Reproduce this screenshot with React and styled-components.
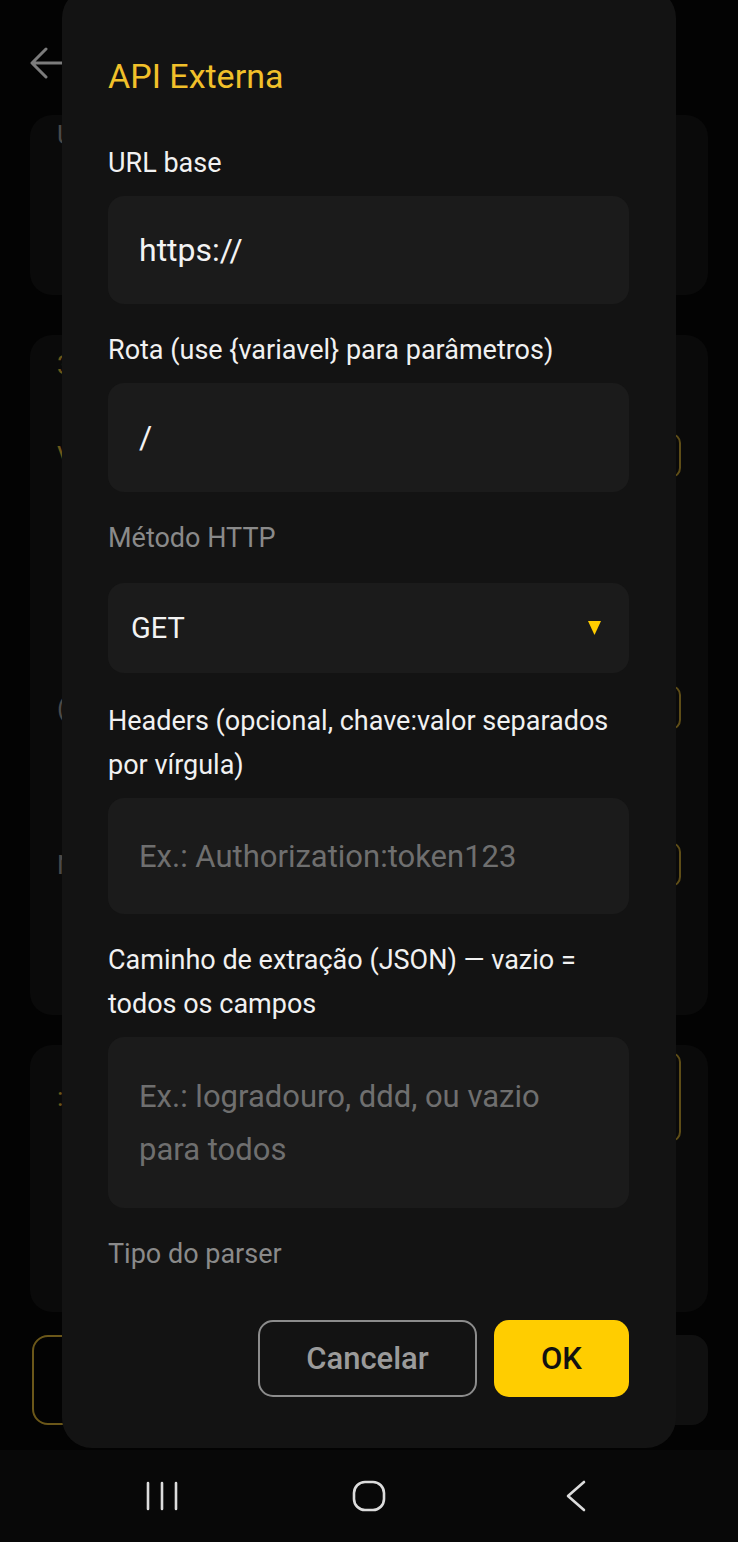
import React from "react";
import styled, { createGlobalStyle } from "styled-components";

const GlobalStyle = createGlobalStyle`
  html, body {
    margin: 0;
    padding: 0;
    background: #030303;
  }
  body {
    font-family: Roboto, "Noto Sans", "Liberation Sans", sans-serif;
  }
`;

const Phone = styled.div`
  position: relative;
  width: 738px;
  height: 1542px;
  overflow: hidden;
  display: flex;
  flex-direction: column;
  background: #030303;
`;

/* the page that sits dimmed behind the dialog */
const Screen = styled.div`
  flex: 1;
  display: flex;
  flex-direction: column;
  padding: 0 30px;
`;

const Header = styled.div`
  height: 115px;
  display: flex;
  align-items: flex-start;
  padding-top: 47px;
  box-sizing: border-box;
`;

const Card = styled.div`
  height: ${(p) => p.$h}px;
  margin-top: ${(p) => p.$gap}px;
  background: #0a0a0a;
  border-radius: 22px;
  padding: ${(p) => p.$pad || "0 27px"};
  box-sizing: border-box;
  display: flex;
  flex-direction: column;
`;

/* only a sliver of these glyphs peeks out from behind the dialog */
const DimText = styled.div`
  font-size: 26px;
  line-height: 40px;
  color: ${(p) => (p.$gold ? "#6b5719" : "#4a4a4a")};
  margin-top: ${(p) => p.$mt || 0}px;
`;

const DimRow = styled.div`
  display: flex;
  align-items: center;
  justify-content: space-between;
  margin-top: ${(p) => p.$mt || 0}px;
`;

const OutlineBox = styled.div`
  width: 220px;
  height: ${(p) => p.$h || 45}px;
  border: 2px solid #5e4d17;
  border-radius: 10px;
  box-sizing: border-box;
`;

const BottomButtons = styled.div`
  display: flex;
  gap: 20px;
  margin-top: 23px;
  margin-left: 2px;
`;

const GhostButton = styled.div`
  flex: 1;
  height: 90px;
  border-radius: 16px;
  box-sizing: border-box;
  border: ${(p) => (p.$outline ? "2px solid #6b5719" : "none")};
  background: ${(p) => (p.$outline ? "transparent" : "#101010")};
`;

const NavBar = styled.div`
  height: 92px;
  background: #080808;
  display: flex;
  align-items: center;
  gap: 147px;
  padding-left: 132px;
  box-sizing: border-box;
`;

const NavSlot = styled.div`
  width: 60px;
  display: flex;
  justify-content: center;
`;

/* dialog */
const Dialog = styled.div`
  position: absolute;
  left: 62px;
  top: -12px;
  width: 614px;
  height: 1460px;
  box-sizing: border-box;
  background: #131313;
  border-radius: 30px;
  padding: 68px 47px 0 46px;
  display: flex;
  flex-direction: column;
`;

const Title = styled.h2`
  margin: 0 0 21px;
  font-size: 34px;
  line-height: 40px;
  font-weight: 400;
  color: #f1c02a;
`;

const Label = styled.div`
  margin-top: ${(p) => p.$mt ?? 24}px;
  margin-bottom: ${(p) => (p.$muted ? 23 : 11)}px;
  font-size: 27px;
  line-height: 44px;
  color: ${(p) => (p.$muted ? "#8a8a8a" : "#f1f1f1")};
`;

const Input = styled.div`
  height: ${(p) => p.$h}px;
  background: #1b1b1b;
  border-radius: 16px;
  box-sizing: border-box;
  padding: 0 70px 0 31px;
  display: flex;
  align-items: center;
  font-size: ${(p) => (p.$placeholder ? 31 : 32)}px;
  line-height: 53px;
  color: ${(p) => (p.$placeholder ? "#6f6f6f" : "#f3f3f3")};
`;

const Select = styled.div`
  height: 90px;
  background: #1b1b1b;
  border-radius: 16px;
  box-sizing: border-box;
  padding: 0 28px 0 23px;
  display: flex;
  align-items: center;
  justify-content: space-between;
  font-size: 29px;
  color: #f3f3f3;
`;

const Actions = styled.div`
  margin-top: 21px;
  display: flex;
  justify-content: flex-end;
  gap: 17px;
`;

const Button = styled.button`
  height: 77px;
  width: ${(p) => p.$w}px;
  border-radius: 15px;
  box-sizing: border-box;
  font-family: inherit;
  font-size: 31px;
  font-weight: 500;
  cursor: pointer;
  border: ${(p) => (p.$primary ? "none" : "2px solid #8c8c8c")};
  background: ${(p) => (p.$primary ? "#ffcd00" : "transparent")};
  color: ${(p) => (p.$primary ? "#111" : "#9b9b9b")};
`;

const BackArrow = () => (
  <svg width="34" height="32" viewBox="0 0 34 32" fill="none" stroke="#7c7c7c" strokeWidth="3" strokeLinecap="round" strokeLinejoin="round">
    <path d="M32 16H3M16 2L2 16l14 14" />
  </svg>
);

const Caret = () => (
  <svg width="13" height="14" viewBox="0 0 13 14">
    <path d="M0 0h13L6.5 14z" fill="#ffcd00" />
  </svg>
);

const RecentsIcon = () => (
  <svg width="34" height="30" viewBox="0 0 34 30" stroke="#dcdcdc" strokeWidth="2.6" strokeLinecap="round">
    <path d="M3 2v26M17 2v26M31 2v26" />
  </svg>
);

const HomeIcon = () => (
  <svg width="34" height="32" viewBox="0 0 34 32" fill="none" stroke="#dcdcdc" strokeWidth="2.6">
    <rect x="2" y="2" width="30" height="28" rx="11" />
  </svg>
);

const BackIcon = () => (
  <svg width="24" height="32" viewBox="0 0 24 32" fill="none" stroke="#dcdcdc" strokeWidth="2.6" strokeLinecap="round" strokeLinejoin="round">
    <path d="M20 2L4 16l16 14" />
  </svg>
);

export default function App() {
  return (
    <>
      <GlobalStyle />
      <Phone>
        <Screen>
          <Header>
            <BackArrow />
          </Header>
          <Card $h={180} $gap={0} $pad="0 27px">
            <DimText>U</DimText>
          </Card>
          <Card $h={680} $gap={40} $pad="10px 27px">
            <DimText $gold>3</DimText>
            <DimRow $mt={48}>
              <DimText $gold>V</DimText>
              <OutlineBox />
            </DimRow>
            <DimRow $mt={207}>
              <DimText>(</DimText>
              <OutlineBox />
            </DimRow>
            <DimRow $mt={112}>
              <DimText>N</DimText>
              <OutlineBox />
            </DimRow>
          </Card>
          <Card $h={267} $gap={30} $pad="7px 27px">
            <DimRow>
              <DimText $gold>:</DimText>
              <OutlineBox $h={90} />
            </DimRow>
          </Card>
          <BottomButtons>
            <GhostButton $outline />
            <GhostButton />
          </BottomButtons>
        </Screen>

        <NavBar>
          <NavSlot>
            <RecentsIcon />
          </NavSlot>
          <NavSlot>
            <HomeIcon />
          </NavSlot>
          <NavSlot>
            <BackIcon />
          </NavSlot>
        </NavBar>

        <Dialog>
          <Title>API Externa</Title>

          <Label>URL base</Label>
          <Input $h={108}>https://</Input>

          <Label>Rota (use {"{variavel}"} para parâmetros)</Label>
          <Input $h={109}>/</Input>

          <Label $muted>Método HTTP</Label>
          <Select>
            GET
            <Caret />
          </Select>

          <Label $mt={26}>Headers (opcional, chave:valor separados por vírgula)</Label>
          <Input $h={116} $placeholder>
            Ex.: Authorization:token123
          </Input>

          <Label>Caminho de extração (JSON) — vazio = todos os campos</Label>
          <Input $h={171} $placeholder>
            Ex.: logradouro, ddd, ou vazio para todos
          </Input>

          <Label $muted>Tipo do parser</Label>

          <Actions>
            <Button $w={219}>Cancelar</Button>
            <Button $primary $w={135}>
              OK
            </Button>
          </Actions>
        </Dialog>
      </Phone>
    </>
  );
}
